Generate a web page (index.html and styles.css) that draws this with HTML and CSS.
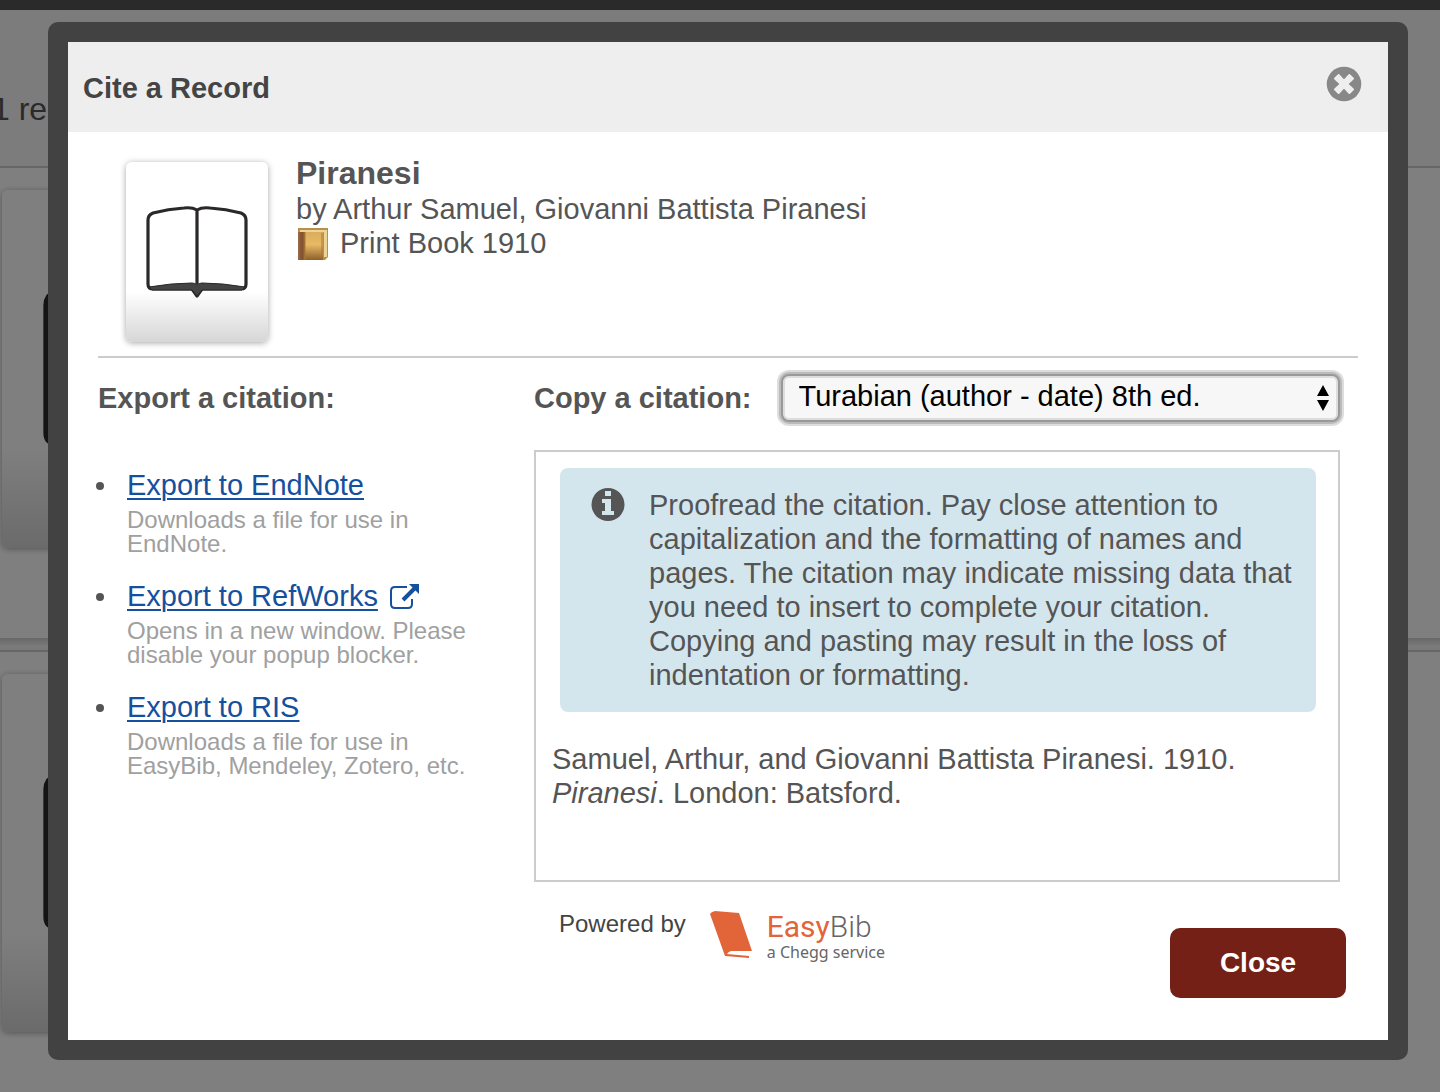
FILE: index.html
```html
<!DOCTYPE html>
<html lang="en">
    <head>
        <meta charset="utf-8">
        <title>Cite a Record</title>
        <meta name="viewport" content="width=device-width, initial-scale=1.0"/>
        <link rel="stylesheet" href="styles.css">
    </head>
    <body>
        <svg class="symbols" aria-hidden="true">
            <symbol id="open-book" viewBox="0 0 142 180">
                <path d="M71 48 Q66 45 58 46 Q42 47 27 51 Q22 53 22 58 V122 Q22 127 27 127 H66 L71 134 L76 127 H115 Q120 127 120 122 V58 Q120 53 115 51 Q100 47 84 46 Q76 45 71 48 V122" fill="none" stroke="#2b2829" stroke-width="3.2" stroke-linejoin="round"/>
                <path d="M23 125 Q46 121 66 121 Q69 121 71 123 Q73 121 76 121 Q96 121 119 125 L116 128 H76 L71 134 L66 128 H26 Z" fill="#444" stroke="#2b2829"/>
            </symbol>
        </svg>

        <div class="page">
            <div class="top_bar"></div>
            <div class="result_count">1 re</div>
            <div class="result">
                <div class="cover cover_large"><svg><use href="#open-book"/></svg></div>
            </div>
            <div class="divider"></div>
            <div class="result">
                <div class="cover cover_large"><svg><use href="#open-book"/></svg></div>
            </div>
        </div>

        <div class="overlay">
            <div class="dialog" role="dialog" aria-labelledby="dialog_title">
                <div class="dialog_header">
                    <h1 id="dialog_title">Cite a Record</h1>
                    <button class="close_icon" type="button" aria-label="Close">
                        <svg width="36" height="36" viewBox="0 0 36 36">
                            <circle cx="18" cy="18" r="17.3" fill="#888"/>
                            <path d="M12.5 12.5 L23.5 23.5 M23.5 12.5 L12.5 23.5" stroke="#eee" stroke-width="7" stroke-linecap="square"/>
                            <path d="M18 7 L20 11 L18 13 L16 11 Z M18 29 L20 25 L18 23 L16 25 Z M7 18 L11 16 L13 18 L11 20 Z M29 18 L25 16 L23 18 L25 20 Z" fill="#888"/>
                            <circle cx="18" cy="18" r="13.4" fill="none" stroke="#888" stroke-width="3.6"/>
                        </svg>
                    </button>
                </div>

                <div class="record">
                    <div class="cover"><svg><use href="#open-book"/></svg></div>
                    <div class="record_info">
                        <h2>Piranesi</h2>
                        <div>by Arthur Samuel, Giovanni Battista Piranesi</div>
                        <div class="format">
                            <svg width="32" height="34" viewBox="0 0 32 34">
                                <defs>
                                    <linearGradient id="gold" x1="0" y1="0" x2="0" y2="1">
                                        <stop offset="0" stop-color="#d9ad5c"/>
                                        <stop offset=".45" stop-color="#e8b966"/>
                                        <stop offset="1" stop-color="#8d6029"/>
                                    </linearGradient>
                                    <linearGradient id="spine" x1="0" y1="0" x2="1" y2="0">
                                        <stop offset="0" stop-color="#9a6a4a"/>
                                        <stop offset=".5" stop-color="#80502d"/>
                                        <stop offset="1" stop-color="#a87538"/>
                                    </linearGradient>
                                </defs>
                                <path d="M2 2 H32 V31 L29 34 H2 Z" fill="#b98f4b"/>
                                <path d="M4 4 H31 V31 H28 V6 H4 Z" fill="#ead596"/>
                                <rect x="2" y="6" width="8" height="28" fill="url(#spine)"/>
                                <rect x="9" y="6" width="18" height="28" fill="url(#gold)"/>
                                <path d="M9 6 V34 M26 7 V31" stroke="#a97939" stroke-width="1"/>
                            </svg>
                            <span>Print Book 1910</span>
                        </div>
                    </div>
                </div>

                <div class="columns">
                    <div class="export">
                        <h3>Export a citation:</h3>
                        <ul>
                            <li>
                                <div>
                                    <a href="#">Export to EndNote</a>
                                    <p>Downloads a file for use in EndNote.</p>
                                </div>
                            </li>
                            <li>
                                <div>
                                    <a href="#">Export to RefWorks</a>
                                    <svg class="new_window" width="30" height="26" viewBox="0 0 30 26">
                                        <path d="M17 3 H5 Q1 3 1 7 V20 Q1 24 5 24 H18 Q22 24 22 20 V15" fill="none" stroke="#15509e" stroke-width="2"/>
                                        <path d="M13 16 L25 4" stroke="#15509e" stroke-width="4"/>
                                        <path d="M19 0 H29 V10 Z" fill="#15509e"/>
                                    </svg>
                                    <p>Opens in a new window. Please disable your popup blocker.</p>
                                </div>
                            </li>
                            <li>
                                <div>
                                    <a href="#">Export to RIS</a>
                                    <p>Downloads a file for use in EasyBib, Mendeley, Zotero, etc.</p>
                                </div>
                            </li>
                        </ul>
                    </div>

                    <div class="copy">
                        <div class="style_row">
                            <label for="citation_style">Copy a citation:</label>
                            <div class="select_wrap">
                                <select id="citation_style">
                                    <option>Turabian (author - date) 8th ed.</option>
                                </select>
                                <svg class="arrows" width="14" height="26" viewBox="0 0 14 26">
                                    <path d="M7 0 L13 11 H1 Z M7 26 L13 15 H1 Z"/>
                                </svg>
                            </div>
                        </div>

                        <div class="citation_box">
                            <div class="notice">
                                <svg width="34" height="34" viewBox="0 0 34 34">
                                    <circle cx="17" cy="16.5" r="16.5" fill="#555"/>
                                    <path d="M14 3 H20 V8 H14 Z M11 11 H20 V23 H23 V27 H11 V23 H14 V15 H11 Z" fill="#d4e6ed"/>
                                </svg>
                                <p>Proofread the citation. Pay close attention to capitalization and the formatting of names and pages. The citation may indicate missing data that you need to insert to complete your citation. Copying and pasting may result in the loss of indentation or formatting.</p>
                            </div>
                            <p class="citation">Samuel, Arthur, and Giovanni Battista Piranesi. 1910. <em>Piranesi</em>. London: Batsford.</p>
                        </div>

                        <div class="dialog_footer">
                            <div class="powered">
                                <span>Powered by</span>
                                <svg width="43" height="48" viewBox="0 0 43 48">
                                    <path d="M0 4 Q1 2 5 1 L29 3 L42 41 L21 41 Q18 42 17 44 L39 46 V48 L15 46 Z" fill="#e2653a"/>
                                </svg>
                                <div class="logo_text">
                                    <div class="brand"><b>Easy</b>Bib</div>
                                    <div class="service">a Chegg service</div>
                                </div>
                            </div>
                            <button class="close_button" type="button">Close</button>
                        </div>
                    </div>
                </div>
            </div>
        </div>
    </body>
</html>
```
FILE: styles.css
```css
* {
    box-sizing: border-box;
}
body {
    margin: 0;
    color: #555; font-family: "Liberation Sans", Arial, Helvetica, sans-serif; font-size: 29px;
    line-height: 34px;
}
h1, h2, h3, p, ul {
    margin: 0; padding: 0;
}
svg {
    display: block; flex: none;
}
.symbols {
    position: absolute; width: 0; height: 0;
}

/* search results behind the dialog */
.page {
    height: 100vh; overflow: hidden;
    background: #fff;
}
.top_bar {
    height: 10px;
    background: #545454;
}
.result_count {
    height: 158px; padding-top: 82px;
    border-bottom: 2px solid #ccc;
    background: #f8f8f8;
    text-indent: -8px; font-size: 32px;
}
.result {
    height: 470px; padding: 22px 2px;
}
.divider {
    height: 14px;
    border-bottom: 2px solid #ccc;
    background: linear-gradient(#d0d0d0, #f4f4f4 8px);
}
.cover {
    flex: none;
    width: 142px; height: 180px;
    border-radius: 6px;
    background: linear-gradient(#fff 72%, #d6d6d6);
    box-shadow: 0 1px 6px rgba(0, 0, 0, .35);
}
.cover svg {
    width: 100%; height: 100%;
}
.cover_large {
    width: 284px; height: 358px;
}

/* dialog */
.overlay {
    position: absolute; top: 0; left: 0; right: 0;
    min-height: 100vh; padding: 22px 32px 32px 48px;
    background: rgba(0, 0, 0, .5);
}
.dialog {
    border: 20px solid #424242; border-radius: 10px;
    background: #fff;
}
.dialog_header {
    display: flex; justify-content: space-between; align-items: center;
    height: 90px; padding: 0 26px 0 15px;
    background: #eee;
}
.dialog_header h1 {
    padding-top: 2px;
    color: #444; font-size: 29px;
}
.close_icon {
    padding: 0 0 6px;
    border: 0; background: none;
}
.record {
    display: flex; gap: 28px;
    margin: 0 30px; padding: 24px 28px 14px;
    border-bottom: 2px solid #ccc;
}
.record .cover {
    margin-top: 6px;
}
.record_info h2 {
    padding-bottom: 2px;
    font-size: 32px; line-height: 34px;
}
.format {
    display: flex; gap: 12px;
}
.columns {
    display: grid; grid-template-columns: 436px 1fr;
    padding: 16px 0 42px 30px;
}
.export h3, .style_row label {
    font-size: 29px; font-weight: bold; line-height: 48px;
}
.export ul {
    margin-left: -2px; padding: 46px 60px 0 0;
    list-style: none;
}
.export li {
    display: flex; gap: 23px;
    margin-bottom: 23px;
}
.export li::before {
    content: "";
    flex: none;
    width: 8px; height: 8px; margin-top: 14px;
    border-radius: 50%;
    background: #555;
}
.export a {
    color: #15509e;
    text-decoration-thickness: 2px; text-underline-offset: 3px;
}
.new_window {
    display: inline-block; margin-left: 4px;
    vertical-align: -4px;
}
.export p {
    padding-top: 6px;
    color: #a0a0a0; font-size: 24px; line-height: 24px;
}
.style_row {
    display: flex; gap: 29px;
    margin-right: 48px;
}
.select_wrap {
    position: relative;
    flex: 1;
}
.select_wrap select {
    width: 100%; height: 48px; padding: 0 16px 4px;
    border: 2px solid #999; border-radius: 8px;
    appearance: none;
    background: #f7f7f7;
    box-shadow: 0 0 0 2px #bbb, 0 0 0 4px #ddd, inset 0 0 0 2px #ddd;
    color: #000; font-family: inherit; font-size: 29px;
}
.arrows {
    position: absolute; top: 11px; right: 10px;
    pointer-events: none;
}
.citation_box {
    min-height: 432px; margin: 28px 48px 0 0; padding: 16px;
    border: 2px solid #ccc;
}
.notice {
    display: flex; gap: 24px;
    margin: 0 6px 30px 8px; padding: 20px 20px 20px 31px;
    border-radius: 8px;
    background: #d4e6ed;
}
.dialog_footer {
    display: flex; justify-content: space-between; align-items: flex-end;
    padding: 28px 42px 0 25px;
}
.powered {
    display: flex; align-items: flex-start;
    height: 88px;
    color: #444; font-size: 24px; line-height: 28px;
}
.powered svg {
    margin: 0 14px 0 24px;
}
.logo_text {
    color: #666;
}
.brand {
    font-family: Roboto, sans-serif; font-size: 30px; font-weight: 300; line-height: 34px;
}
.brand b {
    color: #e2653a; font-weight: 400;
}
.service {
    font-family: "Noto Sans", sans-serif; font-size: 16px; line-height: 16px;
}
.close_button {
    width: 176px; height: 70px;
    border: 0; border-radius: 10px;
    background: #752016;
    color: #fff; font-family: inherit; font-size: 28px; font-weight: bold;
}
```
